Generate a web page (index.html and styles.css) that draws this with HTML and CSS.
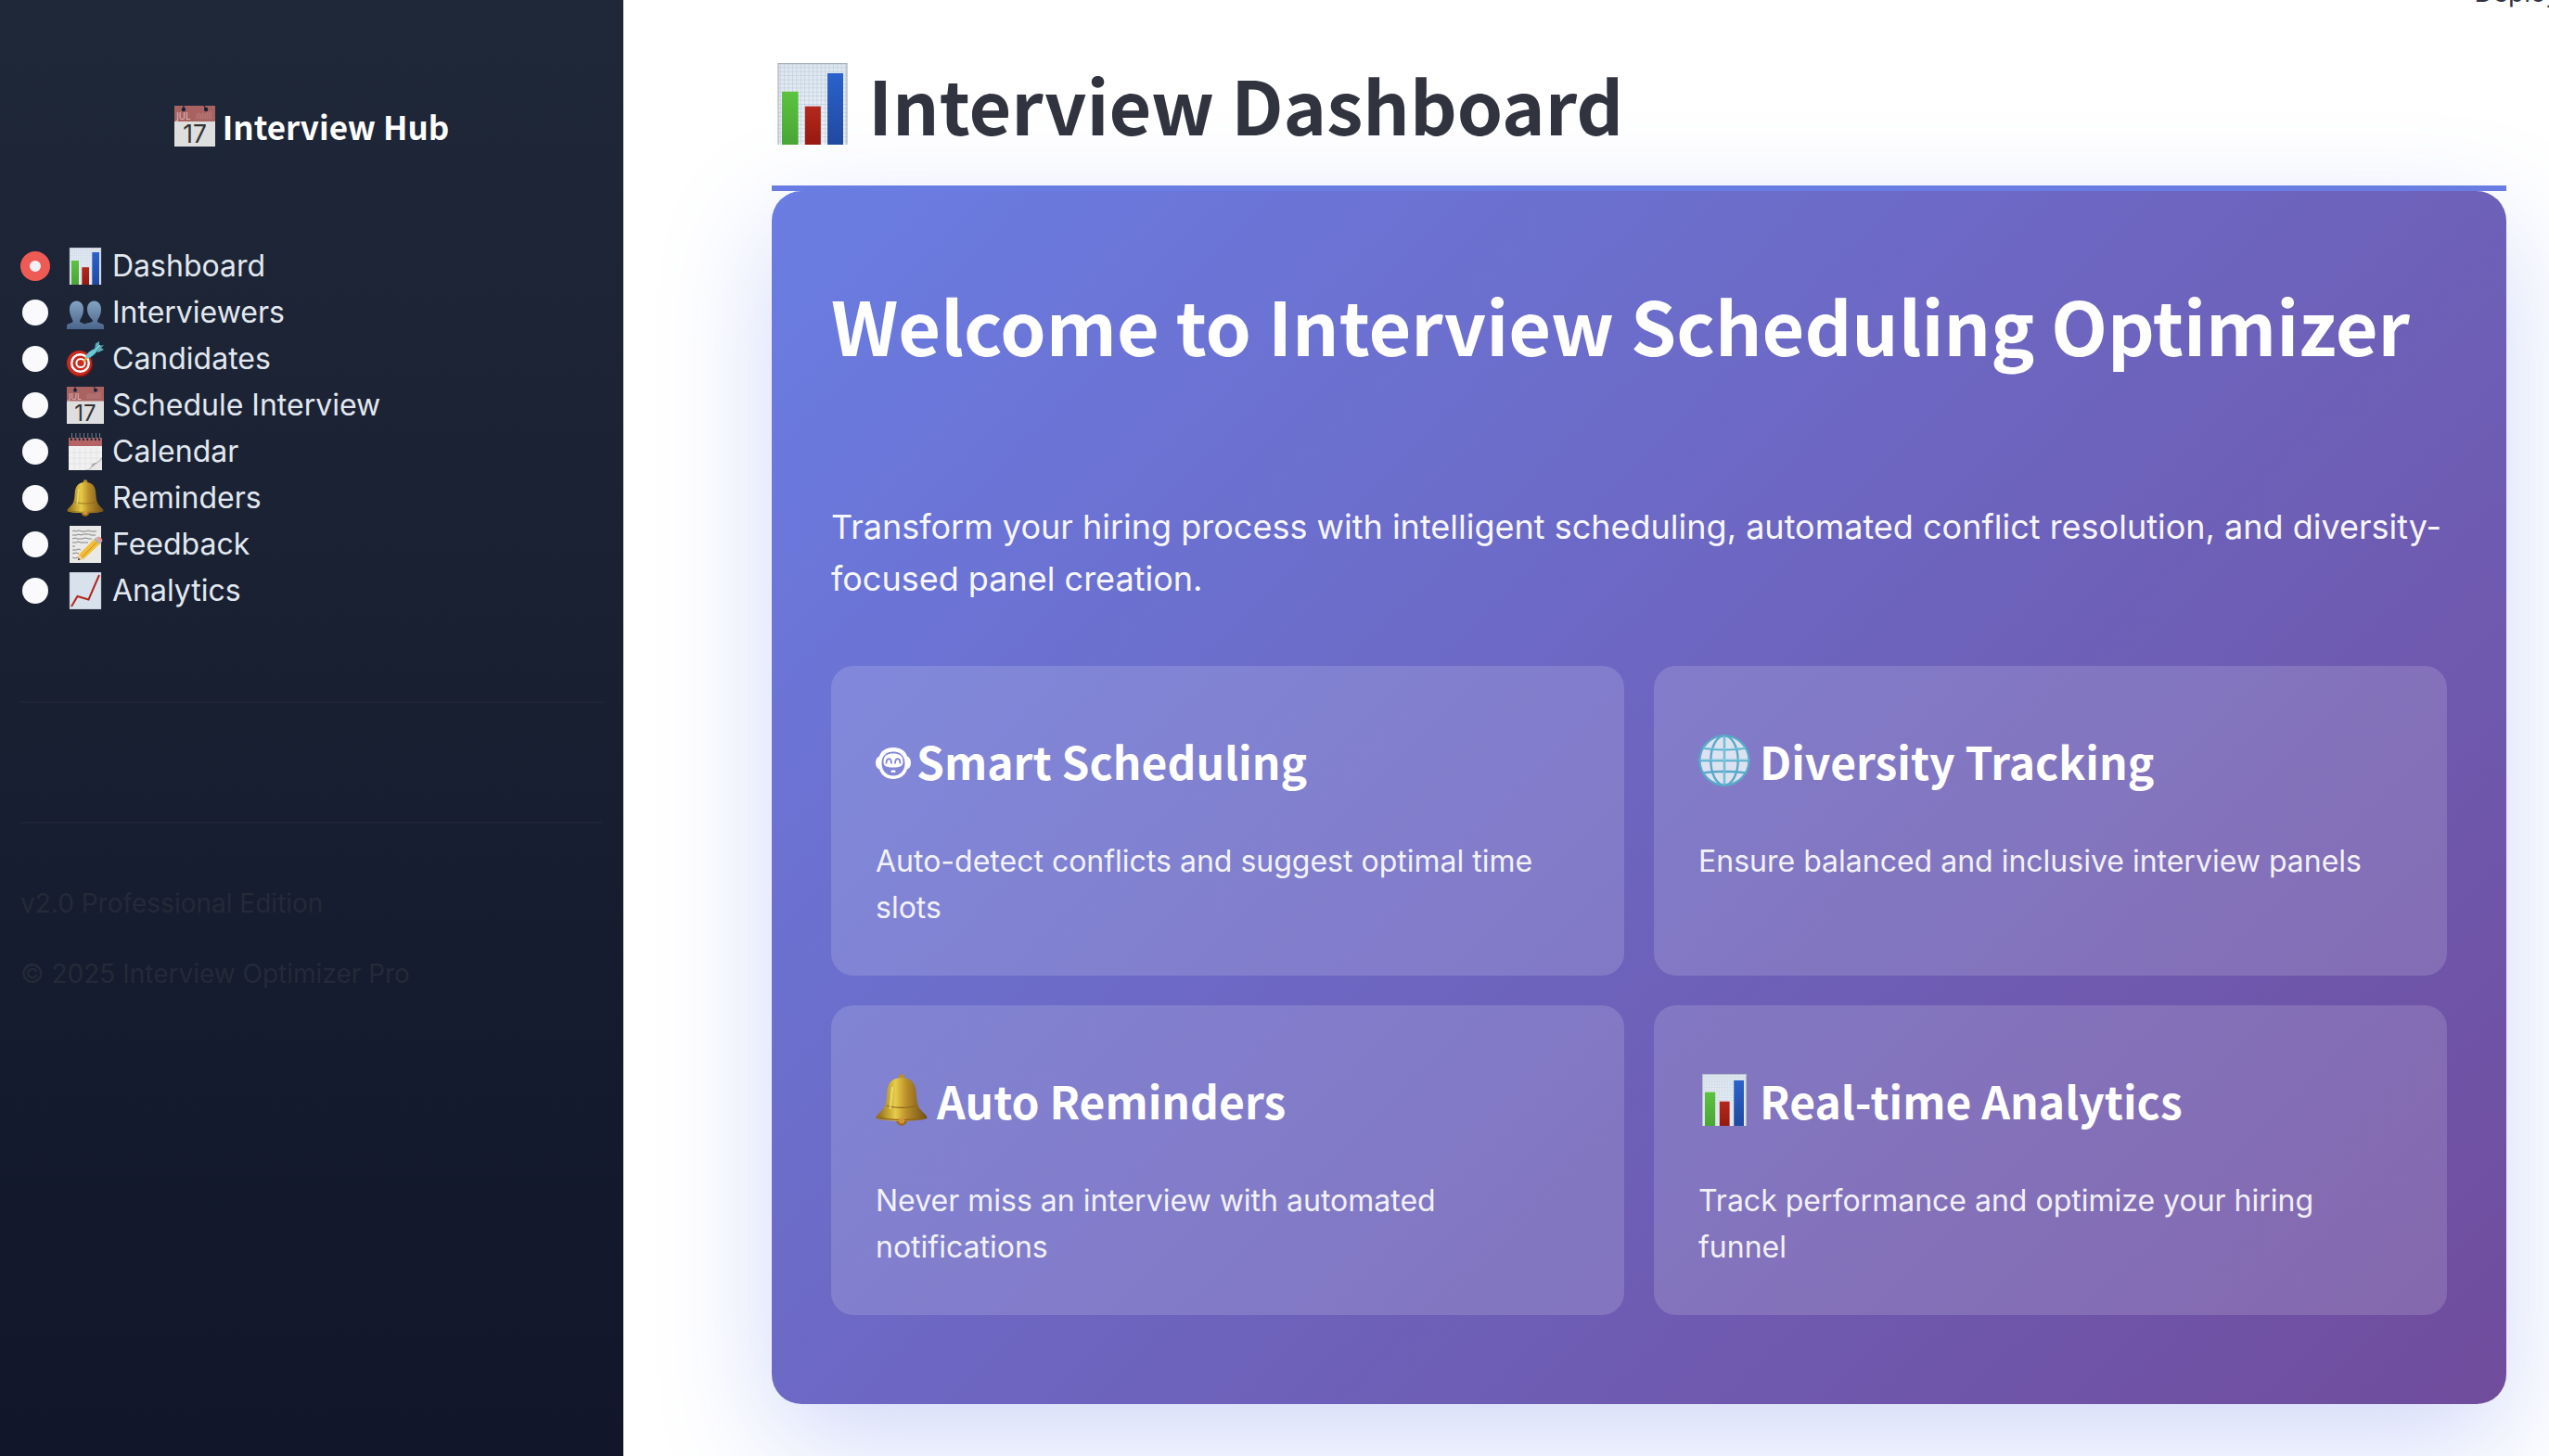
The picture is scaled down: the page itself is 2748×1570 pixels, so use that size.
FILE: index.html
```html
<!DOCTYPE html>
<html lang="en">
<head>
<meta charset="utf-8">
<meta name="viewport" content="width=device-width, initial-scale=1">
<title>Interview Hub</title>
<link rel="stylesheet" href="styles.css">
</head>
<body>
<svg class="sprite" aria-hidden="true">
  <defs>
    <linearGradient id="paper" x1="0" y1="0" x2="0" y2="1"><stop offset="0" stop-color="#dfe6ee"/><stop offset="1" stop-color="#eef0f6"/></linearGradient>
    <linearGradient id="green" x1="0" y1="0" x2="0" y2="1"><stop offset="0" stop-color="#5cc341"/><stop offset="1" stop-color="#4aa535"/></linearGradient>
    <linearGradient id="red" x1="0" y1="0" x2="0" y2="1"><stop offset="0" stop-color="#b5281c"/><stop offset="1" stop-color="#96190f"/></linearGradient>
    <linearGradient id="blue" x1="0" y1="0" x2="0" y2="1"><stop offset="0" stop-color="#2a62cc"/><stop offset="1" stop-color="#2049a0"/></linearGradient>
    <linearGradient id="people" x1="0" y1="0" x2="0" y2="1"><stop offset="0" stop-color="#84a3c3"/><stop offset="1" stop-color="#4a658b"/></linearGradient>
    <linearGradient id="gold" x1="0" y1="0" x2="1" y2="0"><stop offset="0" stop-color="#8a6414"/><stop offset=".38" stop-color="#e6cc48"/><stop offset=".6" stop-color="#b98d2a"/><stop offset="1" stop-color="#6e4e18"/></linearGradient>
    <linearGradient id="curl" x1="0" y1="0" x2="1" y2="1"><stop offset=".3" stop-color="#f4f4f4"/><stop offset=".5" stop-color="#8c8c8c"/><stop offset=".62" stop-color="#e8e8e8"/></linearGradient>
    <pattern id="grid" width="2" height="2" patternUnits="userSpaceOnUse"><path d="M0 .2H2M.2 0V2" stroke="#b9cfe2" stroke-width=".3" fill="none"/></pattern>
  </defs>
  <symbol id="bars" viewBox="0 0 40 40">
    <path d="M3 0h34v40H3z" fill="url(#paper)"/><path d="M3 0h34v40H3z" fill="url(#grid)"/>
    <path d="M3.2 40V.3h33.6V40" fill="none" stroke="#a9b0b8" stroke-width=".5"/>
    <path d="M5 14h8v26H5z" fill="url(#green)"/><path d="M16.3 21.200h7.700v18.800h-7.700z" fill="url(#red)"/><path d="M27.300 5h7.700v35h-7.700z" fill="url(#blue)"/>
  </symbol>
  <symbol id="people-icon" viewBox="0 0 40 40">
    <path d="M20 38v-6c1-1 8-1 8-3 0-2-6-5-6-12.500C22 11 25 7.500 29.500 7.500S37 11 37 16.500C37 24 33 27 33 29.500s7 1.500 7 5V38z" fill="url(#people)"/>
    <path d="M0 38v-3.500C0 31 6.500 32 6.500 29.500S3 24 3 16.500C3 11 6 7.500 10.500 7.500S18 11 18 16.500c0 7.500-4 10.500-4 13 0 2 8 1.500 11 8.500z" fill="url(#people)"/>
  </symbol>
  <symbol id="target" viewBox="0 0 40 40">
    <circle cx="14.500" cy="26" r="13.500" fill="#7f1510"/><circle cx="13.500" cy="24.500" r="13.500" fill="#c92a20"/>
    <circle cx="14.500" cy="24.500" r="9.300" fill="none" stroke="#fff" stroke-width="2.400"/><circle cx="15" cy="24.500" r="4.600" fill="none" stroke="#fff" stroke-width="2"/>
    <path d="M18 23l5-6" stroke="#d8b23a" stroke-width="2"/><path d="M20 17.500c2-4 6-7 11-9l2 3c-3 4-7 7-11 8z" fill="#66c9d6"/><path d="M30 9.500l1-6 4-2.500v5l5-1-3 3 3 2-6 3z" fill="#58aab8"/><path d="M31 10l5-5" stroke="#b5eef3"/>
  </symbol>
  <symbol id="date" viewBox="0 0 40 40">
    <path d="M0 0h40v40H0z" fill="#dedede"/><path d="M0 0h40v15.500H0z" fill="#a86361"/>
    <circle cx="9" cy="3.700" r="2" fill="#14233a"/><circle cx="31" cy="3.700" r="2" fill="#14233a"/><path d="M9 3V0M31 3l-2-3" stroke="#14233a"/>
    <path d="M22 13V8m2 5V7m2 6V8m2 5V7m2 6V8m2 5V6m2 7V6m2 7V6" stroke="#bf8583" stroke-width=".7"/>
    <text x="2" y="13.500" class="date-month">JUL</text><text x="20" y="36.500" text-anchor="middle" class="date-day">17</text>
  </symbol>
  <symbol id="pad" viewBox="0 0 40 40">
    <path d="M2 5h36v35H2z" fill="#f1f1f1"/><path d="M2 5h36v9H2z" fill="#b56465"/>
    <path d="M8 16v24M14 16v24M20 16v24M26 16v20M32 16v14M2 21h36M2 27h36M2 33h28" stroke="#dcdcdc" stroke-width=".7"/>
    <path d="M20 40c6-1 7-6 8-7 4-1 7-3 10-7v14z" fill="url(#curl)"/>
    <path d="M5 8V1M9.300 8V1M13.600 8V1M18 8V1M22.300 8V1M26.600 8V1M31 8V1M35 8V1" stroke="#14202f" stroke-width="1.800"/><path d="M5.500 6V0M9.800 6V0M14.100 6V0M18.500 6V0M22.800 6V0M27.100 6V0M31.500 6V0M35.500 6V0" stroke="#9aa6b4" stroke-width=".7"/>
  </symbol>
  <symbol id="bell" viewBox="0 0 40 40">
    <circle cx="20" cy="35.500" r="4.300" fill="#9a6a1c"/><circle cx="20" cy="2.500" r="2.300" fill="#b68e2a"/>
    <path d="M20 3C11 3 9 9 8.700 15 8 25 7 26 2.500 30.500 0 33 0 34 1 34.500 8 37 32 37 39 34.500c1-.5 1-1.500-1.500-4C33 26 32 25 31.300 15 31 9 29 3 20 3z" fill="url(#gold)"/>
    <path d="M3 33.500c8 2.500 26 2.500 34 0M8.500 24.500c6 2 17 2 23 0" fill="none" stroke="#8b6519" stroke-width=".8"/><circle cx="20" cy="36" r="2.300" fill="#d39336"/>
    <path d="M13 10c-1 6-1 12-2 17" stroke="#fbf28a" stroke-width="1.500" fill="none" opacity=".6"/>
  </symbol>
  <symbol id="memo" viewBox="0 0 40 40">
    <path d="M3 0h34v40H3z" fill="#e9e9e7"/><path d="M6 6l2-1 2 1 3-1 3 1h5l2-1 3 1h6M6 10h5l1-1 3 1 3-1h6l2 1h5M6 14l3-1 2 1h6l3-1 4 1h3M6 18h4l2-1 3 1h8M6 22h3M6 26h4l3-1 2 1M6 30l4-1 3 1M6 34l3 1 3-1" fill="none" stroke="#777" stroke-width=".9"/>
    <path d="M13 31l17-17 5.500 5.500L18 36l-6 1z" fill="#f3bd38"/><path d="M16 34l17-17" stroke="#c98c1c" stroke-width="1"/><path d="M29.500 14.500l2-2 6 5.500-2.500 2z" fill="#aab4bb"/><path d="M32 12.500c2-1.500 4-.5 5 .5 1.500 1.500 2 3 .5 5z" fill="#ee8f94"/><path d="M12 37l1-6 5 4.500z" fill="#e9cfa0"/><path d="M12 37l.5-2.500 2 2z" fill="#333"/>
  </symbol>
  <symbol id="trend" viewBox="0 0 40 40">
    <path d="M3 0h34v40H3z" fill="#dbe4ee"/><path d="M3 0h34v40H3z" fill="url(#grid)" opacity=".5"/><path d="M3.200.3h33.600v39.400H3.200z" fill="none" stroke="#b4bdc7" stroke-width=".5"/>
    <path d="M5 37l6.500-11 12 3.500L35 3" fill="none" stroke="#b3261e" stroke-width="2"/>
  </symbol>
  <symbol id="globe" viewBox="0 0 40 40">
    <circle cx="20" cy="20" r="19" fill="#dde2f1"/>
    <g fill="none" stroke="#58a9c9" stroke-width="1.700"><circle cx="20" cy="20" r="19"/><ellipse cx="20" cy="20" rx="10.500" ry="19"/><path d="M20 1v38M1 20h38M4 10.500c9 1.500 23 1.500 32 0M4 29.500c9-1.500 23-1.500 32 0"/></g>
    <path d="M20 1v38M1 19.500h38M4 10c9 1.500 23 1.500 32 0" fill="none" stroke="#94dcea" stroke-width=".6"/>
  </symbol>
  <symbol id="robot" viewBox="0 -6 38 40">
    <path fill="#fff" fill-rule="evenodd" d="M19 0C27 0 32.500 4 34 9.500 36.500 10.500 38 13 38 16.500S36.500 22.500 34 23.500C32 30 26 34 19 34S6 30 4 23.500C1.500 22.500 0 20 0 16.500S1.500 10.500 4 9.500C5.500 4 11 0 19 0zM19 4.500C11.500 4.500 6.500 9 6.500 17S11.500 30.500 19 30.500 31.500 25 31.500 17 26.500 4.500 19 4.500z"/>
    <path fill="#fff" d="M19 6.500c7 0 10.500 2.500 10.500 9 0 4.500-3 6-10.500 6s-10.500-1.500-10.500-6c0-6.500 3.500-9 10.500-9z"/><path d="M11.500 17.500c0-7 5.500-7 5.500 0M21 17.500c0-7 5.500-7 5.500 0" fill="none" stroke="#8386d5" stroke-width="1.800"/><rect x="16.500" y="24.500" width="5" height="2.500" rx="1" fill="#fff"/>
  </symbol>
</svg>

<div class="app">
  <aside class="sidebar">
    <h2 class="brand"><svg class="brand-icon" aria-hidden="true"><use href="#date"/></svg>Interview Hub</h2>
    <nav class="menu" aria-label="Pages">
      <label class="menu-item"><input class="radio" type="radio" name="page" checked><svg class="menu-icon" aria-hidden="true"><use href="#bars"/></svg>Dashboard</label>
      <label class="menu-item"><input class="radio" type="radio" name="page"><svg class="menu-icon" aria-hidden="true"><use href="#people-icon"/></svg>Interviewers</label>
      <label class="menu-item"><input class="radio" type="radio" name="page"><svg class="menu-icon" aria-hidden="true"><use href="#target"/></svg>Candidates</label>
      <label class="menu-item"><input class="radio" type="radio" name="page"><svg class="menu-icon" aria-hidden="true"><use href="#date"/></svg>Schedule Interview</label>
      <label class="menu-item"><input class="radio" type="radio" name="page"><svg class="menu-icon" aria-hidden="true"><use href="#pad"/></svg>Calendar</label>
      <label class="menu-item"><input class="radio" type="radio" name="page"><svg class="menu-icon" aria-hidden="true"><use href="#bell"/></svg>Reminders</label>
      <label class="menu-item"><input class="radio" type="radio" name="page"><svg class="menu-icon" aria-hidden="true"><use href="#memo"/></svg>Feedback</label>
      <label class="menu-item"><input class="radio" type="radio" name="page"><svg class="menu-icon" aria-hidden="true"><use href="#trend"/></svg>Analytics</label>
    </nav>
    <hr class="rule">
    <hr class="rule">
    <footer class="about">
      <p>v2.0 Professional Edition</p>
      <p>© 2025 Interview Optimizer Pro</p>
    </footer>
  </aside>

  <main class="main">
    <button class="deploy" type="button">Deploy</button>
    <h1 class="page-title"><svg class="title-icon" aria-hidden="true"><use href="#bars"/></svg>Interview Dashboard</h1>
    <section class="hero">
      <h2 class="hero-title">Welcome to Interview Scheduling Optimizer</h2>
      <p class="hero-text">Transform your hiring process with intelligent scheduling, automated conflict resolution, and diversity-focused panel creation.</p>
      <div class="features">
        <article class="card">
          <h3 class="card-title card-title-robot"><svg class="robot-icon" aria-hidden="true"><use href="#robot"/></svg>Smart Scheduling</h3>
          <p class="card-text">Auto-detect conflicts and suggest optimal time slots</p>
        </article>
        <article class="card">
          <h3 class="card-title"><svg class="card-icon" aria-hidden="true"><use href="#globe"/></svg>Diversity Tracking</h3>
          <p class="card-text">Ensure balanced and inclusive interview panels</p>
        </article>
        <article class="card">
          <h3 class="card-title"><svg class="card-icon" aria-hidden="true"><use href="#bell"/></svg>Auto Reminders</h3>
          <p class="card-text">Never miss an interview with automated notifications</p>
        </article>
        <article class="card">
          <h3 class="card-title"><svg class="card-icon" aria-hidden="true"><use href="#bars"/></svg>Real-time Analytics</h3>
          <p class="card-text">Track performance and optimize your hiring funnel</p>
        </article>
      </div>
    </section>
  </main>
</div>
</body>
</html>
```
FILE: styles.css
```css
* { box-sizing: border-box; }

body {
  margin: 0;
  background: #fff;
  color: #31333f;
  font-family: Inter, "Liberation Sans", sans-serif;
  font-size: 32px;
  font-optical-sizing: none;
}

h1, h2, h3, p { margin: 0; }

h1, h2, h3 {
  font-family: "Noto Sans CJK SC", "Noto Sans", sans-serif;
  font-weight: 700;
}

svg { flex: none; }

.sprite { position: absolute; width: 0; height: 0; }

.date-month { font: 400 9px "Open Sans", sans-serif; fill: #e2c4c3; }
.date-day { font: 400 24px Inter, sans-serif; fill: #333; }

.app { display: flex; min-height: 100vh; }

/* Sidebar */
.sidebar {
  flex: none;
  width: 672px;
  padding: 112px 22px 64px;
  background: linear-gradient(180deg, #1f2838, #11162a);
  color: #e2e8f0;
}

.brand {
  display: flex;
  align-items: center;
  justify-content: center;
  gap: 8px;
  margin-bottom: 102px;
  color: #fff;
  font-size: 35px;
  line-height: 48px;
}

.brand-icon { width: 44px; height: 44px; }

.menu { display: flex; flex-direction: column; }

.menu-item {
  display: flex;
  align-items: center;
  line-height: 50px;
}

.radio {
  appearance: none;
  flex: none;
  width: 32px;
  height: 32px;
  margin: 0 18px 0 0;
  border: 2px solid transparent;
  border-radius: 50%;
  background: #fafafc padding-box;
}

.radio:checked {
  border: 10px solid #ee5b54;
  background: #f0f2f6;
}

.menu-icon { width: 40px; height: 40px; margin-right: 9px; }

.rule {
  height: 2px;
  margin: 94px 0 0;
  border: 0;
  background: #1e2435;
}

.rule + .rule { margin-top: 128px; }

.about {
  display: flex;
  flex-direction: column;
  gap: 32px;
  margin-top: 64px;
  color: #242a37;
  font-size: 28px;
  line-height: 44px;
}

/* Main column */
.main {
  position: relative;
  flex: 1;
  min-width: 0;
  padding: 64px 46px 56px 160px;
  overflow: hidden;
}

.deploy {
  position: absolute;
  top: -28px;
  right: -12px;
  padding: 0;
  border: 0;
  background: none;
  color: #31333f;
  font: 400 28px/40px Inter, sans-serif;
}

.page-title {
  display: flex;
  align-items: center;
  gap: 16px;
  padding-bottom: 40px;
  border-bottom: 6px solid #6a7de2;
  font-size: 79px;
  line-height: 96px;
}

.title-icon { width: 88px; height: 88px; }

.hero {
  padding: 96px 64px;
  border-radius: 32px;
  background: linear-gradient(135deg, #6a7de2, #704c9c);
  box-shadow: 0 40px 120px rgba(102, 126, 234, 0.3);
  color: #fff;
}

.hero-title { font-size: 79px; line-height: 96px; }

.hero-text {
  margin: 142px 0 66px;
  font-size: 36px;
  line-height: 56px;
  opacity: 0.95;
}

.features {
  display: grid;
  grid-template-columns: 1fr 1fr;
  gap: 32px;
}

.card {
  padding: 48px;
  border-radius: 24px;
  background: rgba(255, 255, 255, 0.15);
}

.card-title {
  display: flex;
  align-items: center;
  gap: 10px;
  padding: 24px 0;
  margin-bottom: 30px;
  font-size: 48px;
  line-height: 60px;
}

.card-title-robot { gap: 6px; }

.card-icon { width: 56px; height: 56px; }
.robot-icon { width: 38px; height: 40px; }

.card-text { line-height: 50px; opacity: 0.9; }
```
